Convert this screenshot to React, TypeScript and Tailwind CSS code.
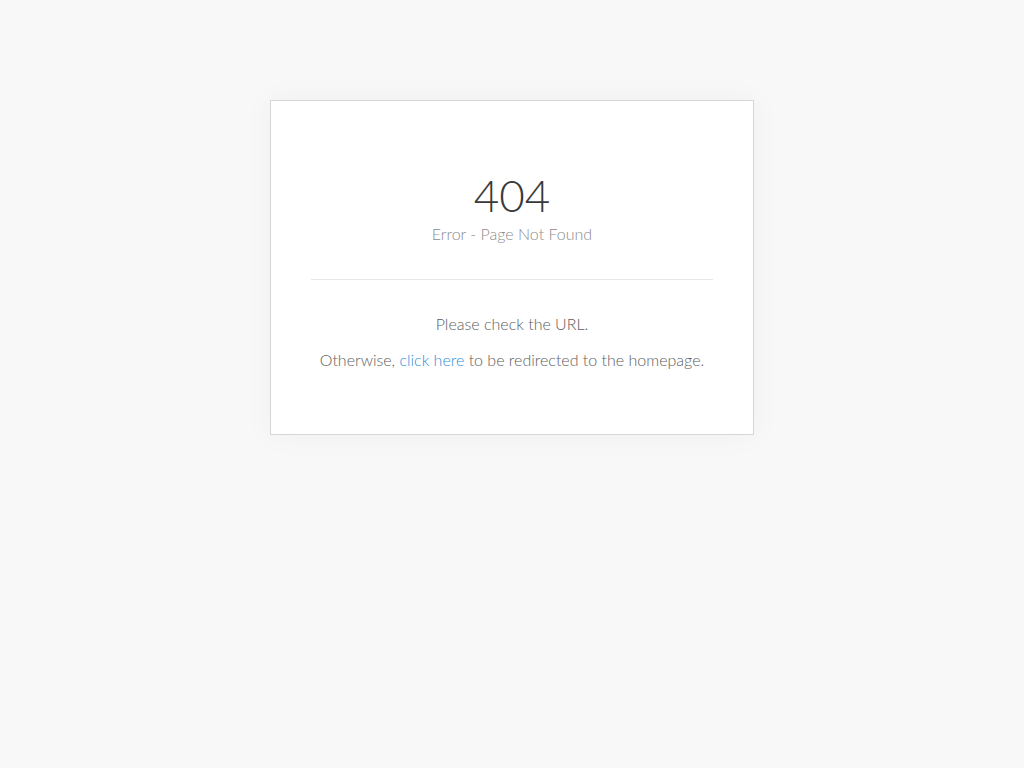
export default function App() {
  return (
    <div className="min-h-screen w-full bg-[#f8f8f8] pt-[100px]" style={{ fontFamily: "Lato, 'Open Sans', sans-serif" }}>
      <div className="mx-auto w-[484px] h-[335px] bg-white border border-[#d6d6d6] shadow-[0_0_30px_rgba(0,0,0,0.04)] px-10 pt-[68px]">
        <div className="text-center">
          <h1 className="text-[44px] leading-[52px] font-light text-[#3a3a3a]">404</h1>
          <p className="text-[16px] leading-6 font-light text-[#8c8c8c] mt-px">Error - Page Not Found</p>
        </div>
        <hr className="border-0 border-t border-[#e6e6e6] mt-[33px]" />
        <div className="text-center text-[16px] font-light text-[#5e5e5e] mt-[32px]">
          <p className="leading-6">Please check the URL.</p>
          <p className="leading-6 mt-3">
            Otherwise, <a href="#" className="text-[#2f8fd8]">click here</a> to be redirected to the homepage.
          </p>
        </div>
      </div>
    </div>
  );
}
